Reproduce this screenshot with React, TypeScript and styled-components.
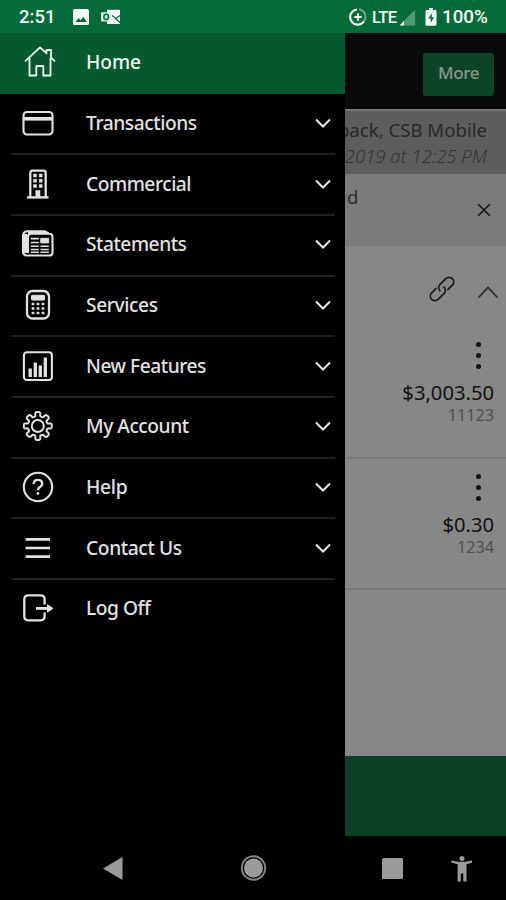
import React from "react";
import styled, { createGlobalStyle } from "styled-components";

const GlobalStyle = createGlobalStyle`
  * { box-sizing: border-box; }
  body { margin: 0; background: #000; overflow: hidden; }
`;

const Phone = styled.div`
  width: 506px;
  height: 900px;
  display: flex;
  flex-direction: column;
  overflow: hidden;
  background: #000;
  font-family: "Noto Sans", "Open Sans", sans-serif;
`;

const StatusBar = styled.header`
  height: 33px;
  flex: none;
  display: flex;
  align-items: center;
  justify-content: space-between;
  padding: 1px 17px 0 19px;
  background: #046b38;
  color: #f4fbf6;
  font: 500 18.5px/33px Roboto, sans-serif;
`;

const StatusGroup = styled.div`
  display: flex;
  align-items: center;
  svg { display: block; flex: none; }
`;

const StatusText = styled.span<{ $width: number; $size?: number; $spacing?: number }>`
  width: ${(p) => p.$width}px;
  font-size: ${(p) => p.$size ?? 18.5}px;
  letter-spacing: ${(p) => p.$spacing ?? 0}px;
  white-space: nowrap;
`;

const CarrierText = styled(StatusText)`
  margin-left: 5px;
`;

const MailIcon = styled.svg`
  width: 20px;
  height: 16px;
  margin-left: 12px;
`;

const BatteryIcon = styled.svg`
  width: 12px;
  height: 18px;
  margin: 0 5px 0 9px;
`;

const Screen = styled.div`
  height: 803px;
  flex: none;
  display: flex;
`;

const Drawer = styled.nav`
  width: 345px;
  flex: none;
  background: #000;
`;

const MenuRow = styled.div<{ $active?: boolean }>`
  height: ${(p) => (p.$active ? 60.5 : 60.7)}px;
  display: flex;
  align-items: center;
  padding: 0 13.5px ${(p) => (p.$active ? 3 : 2)}px 20px;
  color: ${(p) => (p.$active ? "#f1f7f3" : "#e2e2e2")};
  background: ${(p) => (p.$active ? "#04592e" : "transparent")};
`;

const MenuIcon = styled.svg`
  width: 36px;
  height: 36px;
  flex: none;
  fill: none;
  stroke: currentColor;
  stroke-width: 2.1;
  stroke-linejoin: round;
`;

const MenuLabel = styled.span<{ $spacing: number }>`
  flex: 1;
  margin-left: 30px;
  font-size: 19.2px;
  font-weight: 500;
  line-height: 28px;
  letter-spacing: ${(p) => p.$spacing}px;
  white-space: nowrap;
`;

const Chevron = styled.svg`
  width: 18px;
  height: 12px;
  flex: none;
  fill: none;
  stroke: #e6e6e6;
  stroke-width: 2.1;
`;

const Separator = styled.div`
  height: 2px;
  margin: -1px 10px -1px 11px;
  background: #202020;
`;

const Content = styled.main`
  flex: 1;
  min-width: 0;
  display: flex;
  flex-direction: column;
  background: #878787;
  overflow: hidden;
`;

const TopBar = styled.div`
  height: 76px;
  flex: none;
  display: flex;
  justify-content: flex-end;
  align-items: flex-start;
  padding: 20px 12px 0 0;
  background: #0a0a0a;
`;

const MoreButton = styled.button`
  width: 71px;
  height: 43px;
  padding: 0 0 4px;
  border: 0;
  border-radius: 3px;
  background: #0c4427;
  color: #8b948e;
  font: 500 17px "Noto Sans", sans-serif;
  letter-spacing: -0.4px;
`;

const Greeting = styled.section`
  height: 65px;
  flex: none;
  display: flex;
  flex-direction: column;
  align-items: flex-end;
  padding: 7px 19px 0 0;
  border-top: 2px solid #777;
  background: #5d5d5d;
  white-space: nowrap;
`;

const WelcomeText = styled.div`
  font-size: 18.6px;
  line-height: 24px;
  color: #292929;
`;

const LastLogin = styled.div`
  margin-top: 2px;
  font: italic 300 18.5px/24px "Noto Sans", sans-serif;
  color: #343434;
`;

const Notice = styled.section`
  height: 72px;
  flex: none;
  display: flex;
  justify-content: space-between;
  align-items: flex-start;
  padding: 9.5px 15px 0 2px;
  background: #7b7b7b;
  color: #2d2d2d;
  font-size: 18.6px;
  line-height: 26px;
  svg { margin-top: 19.5px; }
`;

const GroupHeader = styled.div`
  height: 84px;
  flex: none;
  display: flex;
  justify-content: flex-end;
  align-items: flex-start;
  padding: 29px 7px 0 0;
  svg { flex: none; display: block; }
`;

const CollapseIcon = styled.svg`
  width: 22px;
  height: 14px;
  margin: 10px 0 0 21px;
`;

const Account = styled.article<{ $height: number; $top: number }>`
  height: ${(p) => p.$height}px;
  flex: none;
  display: flex;
  flex-direction: column;
  align-items: flex-end;
  padding: ${(p) => p.$top}px 12px 0 0;
  border-bottom: 2px solid #7a7a7a;
`;

const Dots = styled.div`
  display: flex;
  flex-direction: column;
  gap: 6px;
  margin-right: 13px;
  i { width: 5px; height: 5px; border-radius: 50%; background: #111; }
`;

const Balance = styled.div`
  margin-top: 11px;
  font-size: 20.2px;
  line-height: 25px;
  color: #111;
`;

const AccountNumber = styled.div`
  font-size: 16.2px;
  line-height: 20px;
  color: #505050;
`;

const Footer = styled.div`
  height: 80px;
  flex: none;
  margin-top: auto;
  background: #0b4026;
`;

const SystemNav = styled.footer`
  height: 64px;
  flex: none;
  display: grid;
  grid-template-columns: 226px 55px 222px auto;
  background: #000;
  svg { display: block; fill: #9b9b9b; }
`;

const NavCell = styled.div<{ $pad: number }>`
  padding: 16px 0 0 ${(p) => p.$pad}px;
  display: flex;
  gap: 44px;
`;

const gearPath = (() => {
  const pts: string[] = [];
  const point = (r: number, deg: number) => {
    const a = (deg * Math.PI) / 180;
    return `${(17.8 + r * Math.sin(a)).toFixed(2)} ${(18 - r * Math.cos(a)).toFixed(2)}`;
  };
  for (let k = 0; k < 8; k++) {
    const a = k * 45;
    pts.push(`${k ? "L" : "M"}${point(10.2, a - 14)}`);
    pts.push(`L${point(13, a - 11)}Q${point(14.6, a - 8)} ${point(13.9, a)}`);
    pts.push(`Q${point(14.6, a + 8)} ${point(13, a + 11)}L${point(10.2, a + 14)}`);
    pts.push(`Q${point(9.4, a + 22.5)} ${point(10.2, a + 31)}`);
  }
  return pts.join("") + "Z";
})();

const calcKeys = [13, 18, 23].flatMap((x) => [17, 21.5, 26].map((y) => [x, y]));
const windows = [15, 20.7].flatMap((x) => [9.5, 14.7, 20].map((y) => [x, y]));

const icons: Record<string, React.ReactNode> = {
  home: (
    <g strokeWidth="1.8">
      <path d="M9.5 14v17.5h6.8V22h7v9.5h7.2V14" />
      <path d="M5 17.3 20 3.4l6.5 6V6H31v7.6l4 3.7" />
    </g>
  ),
  card: (
    <>
      <rect x="3.5" y="7" width="29" height="22.5" rx="3.5" />
      <path d="M3.5 13.8h29" strokeWidth="3.6" />
    </>
  ),
  building: (
    <>
      <path d="M10.3 31V7q0-2.3 2.3-2.3h10.8q2.3 0 2.3 2.3v24" strokeWidth="2.3" />
      <path d="M7 31.4h21.5" strokeWidth="2.4" />
      {windows.map(([x, y]) => (
        <rect key={`${x}-${y}`} x={x - 1.5} y={y - 1.5} width="3" height="3" fill="currentColor" strokeWidth=".5" />
      ))}
      <rect x="15.8" y="24.5" width="4.2" height="6" fill="currentColor" strokeWidth=".6" />
    </>
  ),
  news: (
    <>
      <path d="M8 27V11q0-3.300 3.300-3.300h18q3.200 0 3.200 3.300v15.500q0 3-3 3H7q-4 0-4-4V10q0-4.300 4-4.800h17.500l4.500 2.500" />
      <path d="M5.500 8v19" strokeWidth="4" />
      <path d="M8 6.500h18" strokeWidth="2.500" />
      <rect x="20.800" y="12.300" width="7.800" height="4.600" fill="currentColor" strokeWidth="1" />
      <path d="M10.800 12.600h8M10.800 16.500h8M10.800 20.300h8M20.500 20.300h8.300M10.800 23.500h8M20.500 23.500h8.300M10.800 26.300h8M20.500 26.300h8.300" strokeWidth="1.600" />
    </>
  ),
  calculator: (
    <>
      <rect x="7" y="4" width="22" height="27.5" rx="5.5" strokeWidth="2.3" />
      <rect x="11.5" y="8.3" width="13" height="4.8" rx=".8" fill="currentColor" strokeWidth="1" />
      {calcKeys.map(([x, y]) => (
        <rect key={`${x}-${y}`} x={x - 1.1} y={y - 0.9} width="2.2" height="1.8" fill="currentColor" strokeWidth=".6" />
      ))}
    </>
  ),
  chart: (
    <>
      <rect x="3.9" y="4.3" width="28" height="27.7" rx="3" />
      <path d="M10.2 29v-8.5M15.3 29V14.5M20.3 29V17.5M25.3 29V9.5" strokeWidth="3.3" />
    </>
  ),
  gear: (
    <>
      <path d={gearPath} strokeWidth="1.9" />
      <circle cx="17.8" cy="18" r="6" strokeWidth="1.9" />
    </>
  ),
  help: (
    <>
      <circle cx="18" cy="18" r="14.2" />
      <path d="M13.7 14.900q.1-4 4.200-4 4.300 0 4.300 3.800 0 2-2.300 3.300-2 1.200-1.900 3.200" strokeWidth="2.4" />
      <circle cx="18" cy="24.5" r="1.4" fill="currentColor" stroke="none" />
    </>
  ),
  menu: <path d="M5.5 9.4h24.500M5.500 18h24.500M5.500 26.600h24.500" strokeWidth="2.7" />,
  logoff: (
    <>
      <path d="M24.6 14.5V9.3q0-4-4-4H8.3q-4 0-4 4v17q0 4 4 4h12.3q4 0 4-4V22.6" strokeWidth="2.3" />
      <path d="M16 18.4h12" strokeWidth="2.8" />
      <path d="M27.5 14.7v7.4l5.4-3.7Z" fill="currentColor" strokeWidth="1" />
    </>
  ),
};

const items = [
  { label: "Transactions", icon: "card", spacing: -0.43 },
  { label: "Commercial", icon: "building", spacing: -0.47 },
  { label: "Statements", icon: "news", spacing: -0.47 },
  { label: "Services", icon: "calculator", spacing: -0.38 },
  { label: "New Features", icon: "chart", spacing: -0.47 },
  { label: "My Account", icon: "gear", spacing: -0.47 },
  { label: "Help", icon: "help", spacing: -0.3 },
  { label: "Contact Us", icon: "menu", spacing: -0.38 },
];

const accounts = [
  { balance: "$3,003.50", number: "11123", height: 129, top: 11.5 },
  { balance: "$0.30", number: "1234", height: 131, top: 14.5 },
];

export default function App() {
  return (
    <Phone>
      <GlobalStyle />
      <StatusBar>
        <StatusGroup>
          <StatusText $width={54}>2:51</StatusText>
          <svg width="16" height="16" viewBox="0 0 16 16">
            <rect width="16" height="16" rx="1.6" fill="#f4fbf6" />
            <path d="m2.5 13 3-4 2.2 2.2 2.7-3.4 3.4 5.2Z" fill="#046b38" />
          </svg>
          <MailIcon viewBox="0 0 20 16">
            <path d="M6 .8h13V15H6Z" fill="#f4fbf6" />
            <path d="m11 6.5 4 3 4.500-3.300M19.500 14 14 9" stroke="#046b38" strokeWidth="1.3" fill="none" />
            <rect y="3.2" width="10.3" height="9.3" rx="1" fill="#d7ecdf" />
            <ellipse cx="5.2" cy="7.9" rx="2.3" ry="2.6" fill="none" stroke="#046b38" strokeWidth="1.5" />
          </MailIcon>
        </StatusGroup>
        <StatusGroup>
          <svg width="18" height="18" viewBox="0 0 18 18">
            <path d="M10 1.200a7.800 7.800 0 0 1 4.200 13.100" fill="none" stroke="#6eaa86" strokeWidth="2" />
            <path d="M8 1.500a7.600 7.600 0 1 0 6.800 12.200M9 5.300v7.400M5.300 9h7.400" fill="none" stroke="#f4fbf6" strokeWidth="2.1" />
          </svg>
          <CarrierText $width={27} $size={16.5} $spacing={-0.6}>LTE</CarrierText>
          <svg width="17" height="17" viewBox="0 0 17 17">
            <path d="M16.2.6v15.8H.6Z" fill="#529a70" />
            <path d="M5 12v4.400H.6Z" fill="#f4fbf6" />
          </svg>
          <BatteryIcon viewBox="0 0 12 18">
            <path d="M4 0h4v2h2.200q1.300 0 1.300 1.300v13.200q0 1.300-1.300 1.300H1.800Q.5 17.800.5 16.500V3.300Q.5 2 1.800 2H4Z" fill="#f4fbf6" />
            <path d="M7 5 3.300 10.500h2.400V15L9 9.300H6.700Z" fill="#046b38" />
          </BatteryIcon>
          <StatusText $width={47} $size={18.8}>100%</StatusText>
        </StatusGroup>
      </StatusBar>

      <Screen>
        <Drawer>
          <MenuRow $active>
            <MenuIcon viewBox="0 0 36 36">{icons.home}</MenuIcon>
            <MenuLabel $spacing={-0.1}>Home</MenuLabel>
          </MenuRow>
          {items.map((item) => (
            <React.Fragment key={item.label}>
              <MenuRow>
                <MenuIcon viewBox="0 0 36 36">{icons[item.icon]}</MenuIcon>
                <MenuLabel $spacing={item.spacing}>{item.label}</MenuLabel>
                <Chevron viewBox="0 0 18 12">
                  <path d="m2 2.5 7 7 7-7" />
                </Chevron>
              </MenuRow>
              <Separator />
            </React.Fragment>
          ))}
          <MenuRow>
            <MenuIcon viewBox="0 0 36 36">{icons.logoff}</MenuIcon>
            <MenuLabel $spacing={-0.47}>Log Off</MenuLabel>
          </MenuRow>
        </Drawer>

        <Content>
          <TopBar>
            <MoreButton>More</MoreButton>
          </TopBar>
          <Greeting>
            <WelcomeText>back, CSB Mobile</WelcomeText>
            <LastLogin>2019 at 12:25 PM</LastLogin>
          </Greeting>
          <Notice>
            <span>d</span>
            <svg width="14" height="14" viewBox="0 0 14 14">
              <path d="m1.2 1.2 11.6 11.6M12.8 1.2 1.2 12.8" stroke="#151515" strokeWidth="1.6" />
            </svg>
          </Notice>
          <GroupHeader>
            <svg width="28" height="28" viewBox="-14 -14 28 28" fill="none" stroke="#1c1c1c" strokeWidth="1.8">
              <g transform="rotate(-45)">
                <path d="M-3-4.600H-10a4.600 4.600 0 0 0 0 9.200H-1.800A4.600 4.600 0 0 0 2.800-.6" />
                <path d="M3 4.600H10a4.600 4.600 0 0 0 0-9.200H1.800A4.600 4.600 0 0 0-2.800.6" />
              </g>
            </svg>
            <CollapseIcon viewBox="0 0 22 14">
              <path d="m1.500 12.500 9.500-10 9.500 10" fill="none" stroke="#2a2a2a" strokeWidth="1.8" />
            </CollapseIcon>
          </GroupHeader>
          {accounts.map((account) => (
            <Account key={account.number} $height={account.height} $top={account.top}>
              <Dots>
                <i />
                <i />
                <i />
              </Dots>
              <Balance>{account.balance}</Balance>
              <AccountNumber>{account.number}</AccountNumber>
            </Account>
          ))}
          <Footer />
        </Content>
      </Screen>

      <SystemNav>
        <NavCell $pad={102}>
          <svg width="22" height="32" viewBox="0 0 22 32">
            <path d="M20.5 5v23L1 16.5Z" />
          </svg>
        </NavCell>
        <NavCell $pad={14}>
          <svg width="28" height="32" viewBox="0 0 28 32">
            <circle cx="13.5" cy="16" r="11.7" fill="none" stroke="#858585" strokeWidth="1.9" />
            <circle cx="13.5" cy="16" r="9.5" />
          </svg>
        </NavCell>
        <NavCell $pad={101}>
          <svg width="22" height="32" viewBox="0 0 22 32">
            <rect y="6" width="21" height="21" rx="1.5" />
          </svg>
          <svg width="24" height="32" viewBox="0 0 24 32">
            <circle cx="14" cy="6.5" r="2.5" />
            <path d="m3.500 8.500 7 1.300h7l7-1.300.3 2-6.300 1.700v17.300H15.300V21.500h-2.500v8H9.600V12.200L3.200 10.500Z" />
          </svg>
        </NavCell>
      </SystemNav>
    </Phone>
  );
}
